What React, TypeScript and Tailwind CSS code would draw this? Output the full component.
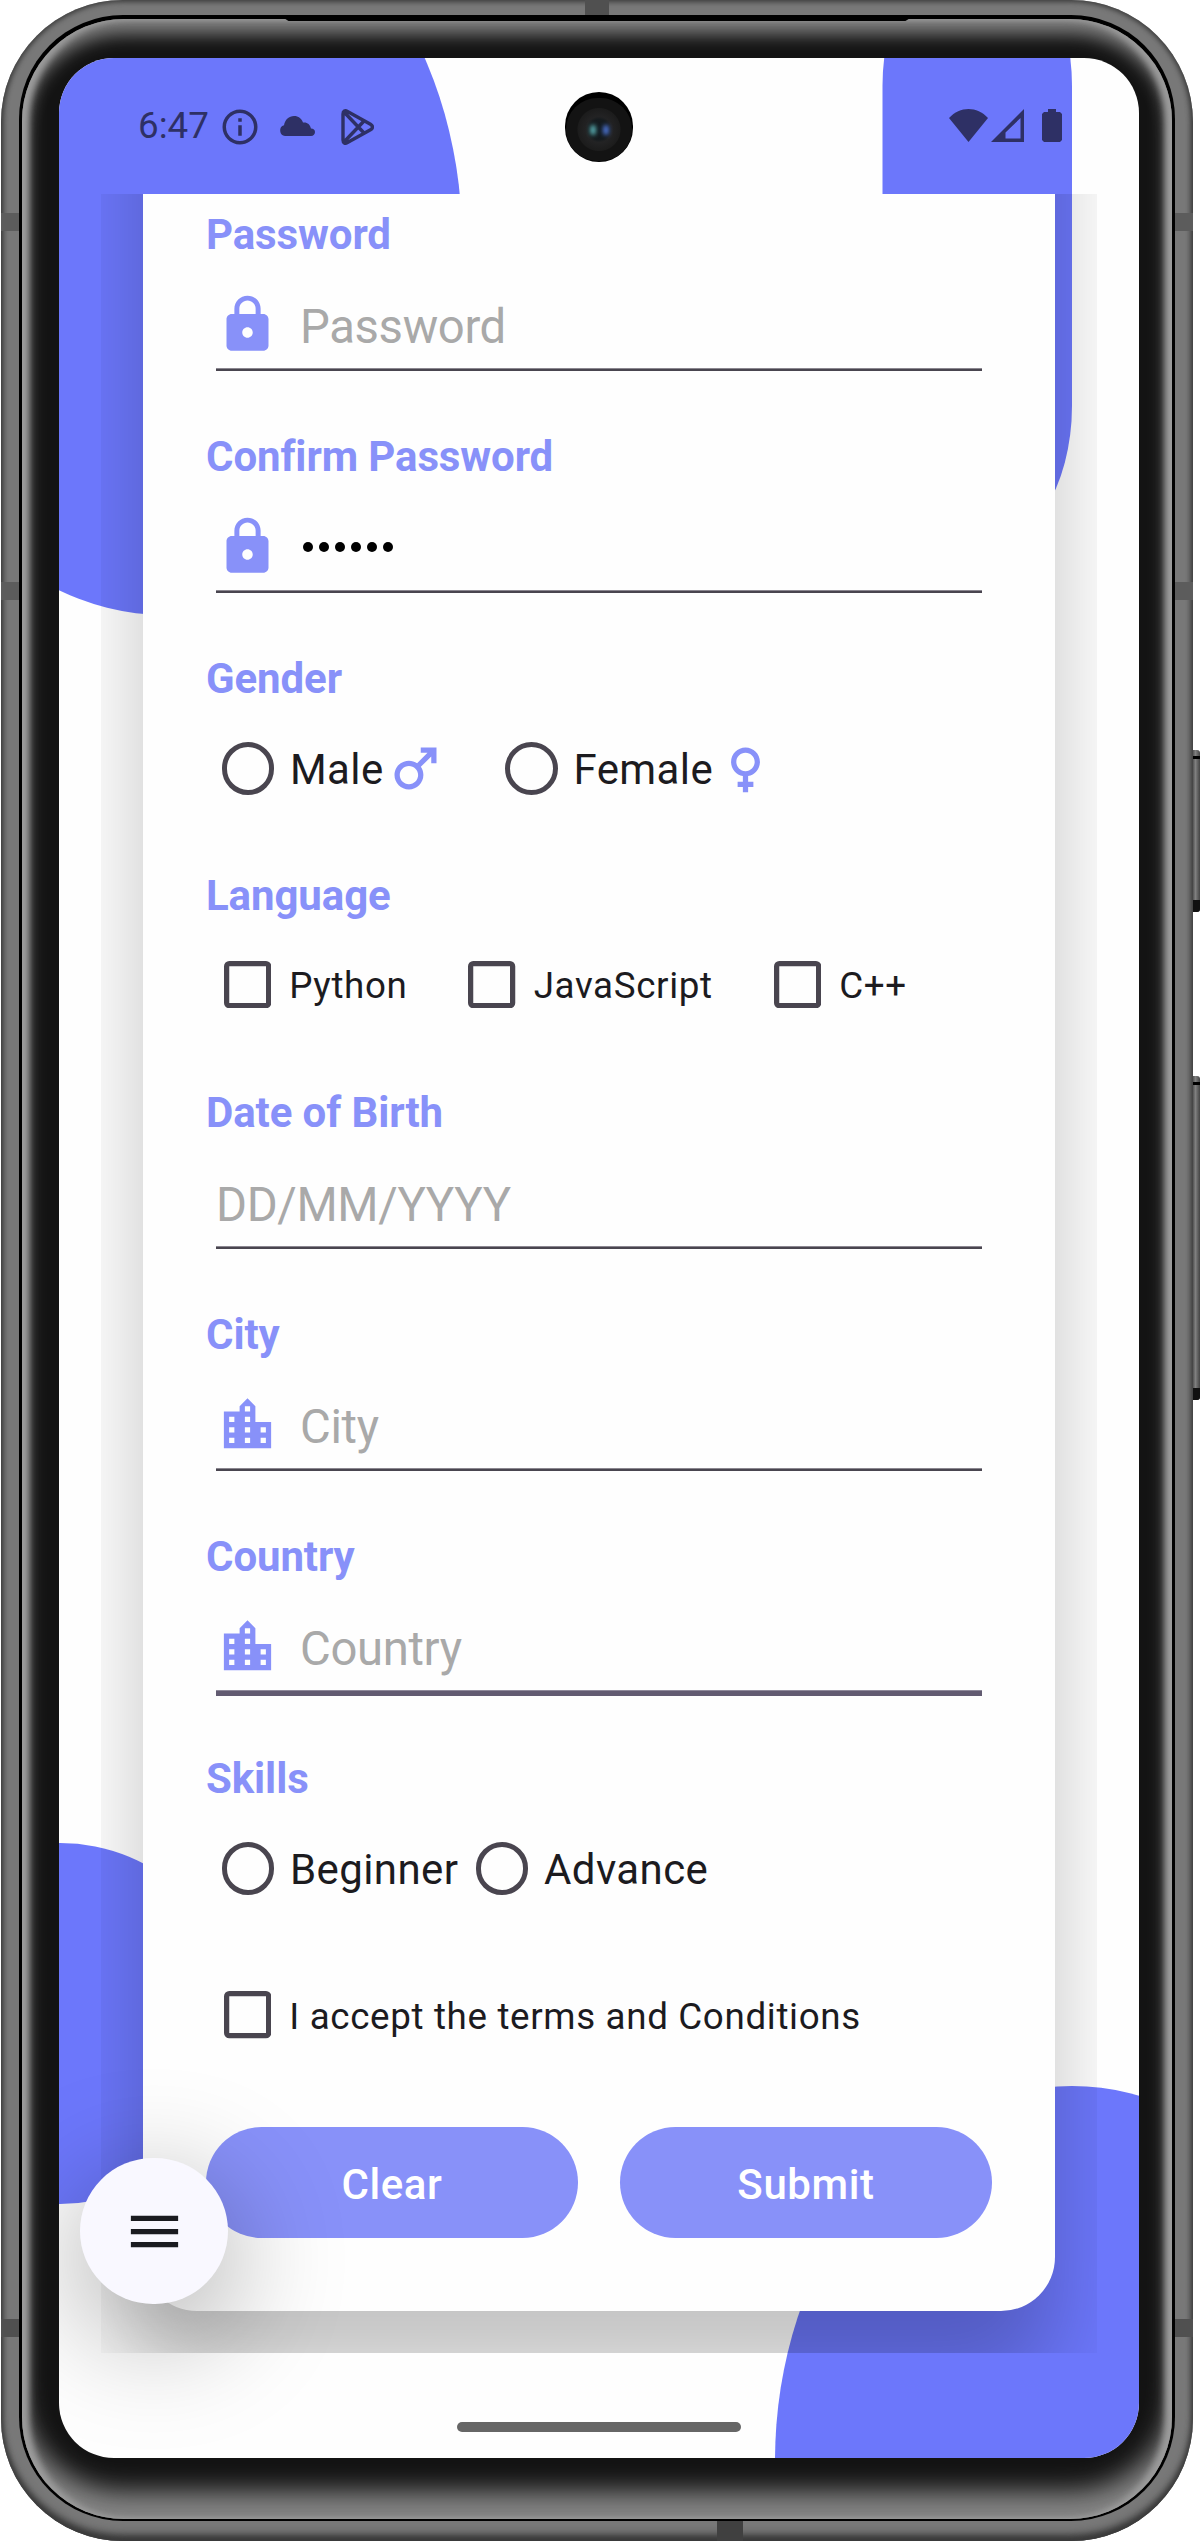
import React from "react";

const LOCK =
  "M18 8h-1V6c0-2.76-2.24-5-5-5S7 3.24 7 6v2H6c-1.1 0-2 .9-2 2v10c0 1.1.9 2 2 2h12c1.1 0 2-.9 2-2V10c0-1.1-.9-2-2-2zm-6 9c-1.1 0-2-.9-2-2s.9-2 2-2 2 .9 2 2-.9 2-2 2zm3.1-9H8.9V6c0-1.71 1.39-3.1 3.1-3.1 1.71 0 3.1 1.39 3.1 3.1v2z";
const CITY =
  "M15 11V5l-3-3-3 3v2H3v14h18V11h-6zm-8 8H5v-2h2v2zm0-4H5v-2h2v2zm0-4H5V9h2v2zm6 8h-2v-2h2v2zm0-4h-2v-2h2v2zm0-4h-2V9h2v2zm0-4h-2V5h2v2zm6 12h-2v-2h2v2zm0-4h-2v-2h2v2z";
const MALE =
  "M9.5 11c1.93 0 3.5 1.57 3.5 3.5S11.43 18 9.5 18 6 16.43 6 14.5 7.57 11 9.5 11zm0-2C6.46 9 4 11.46 4 14.5S6.46 20 9.5 20s5.5-2.46 5.5-5.5c0-1.16-.36-2.23-.97-3.12L18 7.42V10h2V4h-6v2h2.58l-3.97 3.97C11.73 9.36 10.66 9 9.5 9z";
const FEMALE =
  "M17.5 9.5C17.5 6.46 15.04 4 12 4S6.5 6.46 6.5 9.5c0 2.7 1.94 4.93 4.5 5.4V17H9v2h2v2h2v-2h2v-2h-2v-2.1c2.56-.47 4.5-2.7 4.5-5.4zm-9 0C8.5 7.57 10.07 6 12 6s3.5 1.57 3.5 3.5S13.93 13 12 13s-3.5-1.57-3.5-3.5z";

function Icon({ d }: { d: string }) {
  return (
    <svg viewBox="0 0 24 24" className="size-[63px] shrink-0 fill-[#8891f9]">
      <path d={d} />
    </svg>
  );
}

function Section({ label, className, children }: { label: string; className: string; children: React.ReactNode }) {
  return (
    <section className={`flex flex-col ${className}`}>
      <h2 className="h-[50px] text-[42px] leading-[50px] font-bold tracking-[-0.1px] text-[#8891f9]">{label}</h2>
      {children}
    </section>
  );
}

function Field({ icon, placeholder, value, focused }: { icon?: string; placeholder?: string; value?: string; focused?: boolean }) {
  return (
    <div className="mt-[21px] mr-[10px] ml-[10px]">
      <div className="flex h-[87px] items-center gap-[21px] text-[47.25px] leading-[56px]">
        {icon && <Icon d={icon} />}
        {value ? (
          <span className="flex gap-[6.5px] pl-[3px]">
            {value.split("").map((_, i) => (
              <i key={i} className="mt-[1px] h-[10.5px] w-[9.5px] rounded-full bg-black" />
            ))}
          </span>
        ) : (
          <span className="pt-[5px] tracking-[-0.35px] text-[#a9a9a9]">{placeholder}</span>
        )}
      </div>
      {focused ? (
        <div className="h-[6px] bg-[linear-gradient(#8f8a9b_1px,#625b71_1px)]" />
      ) : (
        <div className="h-[3px] bg-[linear-gradient(#8b8790_1px,#49454f_1px)]" />
      )}
    </div>
  );
}

function Radio({ label, className = "" }: { label: string; className?: string }) {
  return (
    <label className={`flex shrink-0 items-center gap-[16px] ${className}`}>
      <span className="size-[52.5px] shrink-0 rounded-full border-[5.25px] border-[#49454f]" />
      <span className="pt-[2.5px] text-[42px] leading-[50px] tracking-[0.4px] text-[#1c1b1f]">{label}</span>
    </label>
  );
}

function Check({ label, className = "" }: { label: string; className?: string }) {
  return (
    <label className={`flex shrink-0 items-center ${className}`}>
      <svg viewBox="0 0 18 18" className="mr-[18px] size-[47.25px] shrink-0">
        <path fill="#49454f" fillRule="evenodd" d="M2 0h14a2 2 0 0 1 2 2v14a2 2 0 0 1-2 2H2a2 2 0 0 1-2-2V2a2 2 0 0 1 2-2zm0 2v14h14V2z" />
      </svg>
      <span className="pt-[3px] text-[36.75px] leading-[44px] tracking-[0.65px] whitespace-nowrap text-[#1c1b1f]">{label}</span>
    </label>
  );
}

function StatusBar() {
  return (
    <div className="absolute inset-x-0 top-0 flex h-[136px] items-center pt-[3px] pl-[79px] text-[#2e3065]">
      <span className="-mt-[4px] w-[80.5px] text-[36.75px] leading-[44px]">6:47</span>
      <svg viewBox="0 0 24 24" className="-mt-[1px] size-[42px]" fill="currentColor">
        <path d="M11 7h2v2h-2zm0 4h2v6h-2zm1-9C6.480 2 2 6.480 2 12s4.480 10 10 10 10-4.480 10-10S17.520 2 12 2zm0 18c-4.410 0-8-3.590-8-8s3.590-8 8-8 8 3.590 8 8-3.590 8-8 8z" />
      </svg>
      <svg viewBox="0 0 36 20" className="mt-[-4px] ml-[18px] h-[20px] w-[36px]" fill="currentColor">
        <path d="M6 20A5.500 5.500 0 0 1 5 9.300C6 3.500 10 0 15 0c4.500 0 7.500 2.500 9 6.500 4-.6 7 1.500 8 6 2.500 0 4 1.500 4 3.500S34.500 20 32 20z" />
      </svg>
      <svg viewBox="0 0 33 36" className="-mt-[1px] ml-[26px] h-[36px] w-[33px]" fill="none" stroke="currentColor" strokeWidth="3.400" strokeLinejoin="round">
        <path d="M2 5v26c0 3 2 4 4.500 2.600l23-12.800c2.600-1.500 2.600-4.100 0-5.600L6.500 2.400C4 1 2 2 2 5zM3 3l20.500 21.500M3 33l20.500-21.500" />
      </svg>
      <svg viewBox="0 0 39 33" className="-mt-[4px] ml-[575px] h-[33px] w-[39px]" fill="currentColor">
        <path d="M0 9C11-3 28-3 39 9L19.500 33z" />
      </svg>
      <svg viewBox="0 0 33 33" className="-mt-[4px] ml-[3px] h-[33px] w-[33px]" fill="currentColor">
        <path fillRule="evenodd" d="M33 0v33H0zM29.500 9L14.500 23.500v6h15z" />
      </svg>
      <svg viewBox="0 0 20 33" className="-mt-[4px] ml-[18.5px] h-[33px] w-[20px]" fill="currentColor">
        <path d="M6 0h8v3h4l2 2v26l-2 2H2l-2-2V5l2-2h4z" />
      </svg>
    </div>
  );
}

function Screen() {
  return (
    <main className="relative h-[2400px] w-[1080px] overflow-hidden rounded-[55px] bg-[#fefefe] font-[Roboto,sans-serif]">
      <svg viewBox="0 0 1080 2400" className="absolute inset-0 size-full" fill="#6c77fb">
        <ellipse cx="106" cy="182" rx="297" ry="375" />
        <rect x="823.500" y="-120" width="189.500" height="616" rx="94.750" ry="148" />
        <circle cx="1" cy="1965.500" r="180.500" />
        <ellipse cx="1013" cy="2403" rx="297" ry="375" />
      </svg>

      <div className="relative mt-[136px] ml-[42px] h-[2159px] w-[996px] overflow-hidden">
        <div className="-mt-[400px] ml-[42px] h-[2517px] w-[912px] rounded-[54px] bg-[#fefefe] pt-[416px] pr-[63px] pl-[63px] shadow-[0_70px_90px_rgba(0,0,0,0.23)]">
          <Section label="Password" className="h-[222px]">
            <Field icon={LOCK} placeholder="Password" />
          </Section>
          <Section label="Confirm Password" className="h-[222px]">
            <Field icon={LOCK} value="secret" />
          </Section>
          <Section label="Gender" className="h-[217px]">
            <div className="mt-[33px] ml-[15.5px] flex h-[63px] items-center">
              <Radio label="Male" className="w-[162.5px]" />
              <Icon d={MALE} />
              <Radio label="Female" className="ml-[58px] w-[208.5px]" />
              <Icon d={FEMALE} />
            </div>
          </Section>
          <Section label="Language" className="h-[217px]">
            <div className="mt-[32px] ml-[18px] flex h-[63px] items-center">
              <Check label="Python" className="w-[244.4px]" />
              <Check label="JavaScript" className="w-[305.6px]" />
              <Check label="C++" />
            </div>
          </Section>
          <Section label="Date of Birth" className="h-[222px]">
            <Field placeholder="DD/MM/YYYY" />
          </Section>
          <Section label="City" className="h-[222px]">
            <Field icon={CITY} placeholder="City" />
          </Section>
          <Section label="Country" className="h-[222px]">
            <Field icon={CITY} placeholder="Country" focused />
          </Section>
          <Section label="Skills" className="h-[216px]">
            <div className="mt-[33px] ml-[15.5px] flex h-[63px] items-center">
              <Radio label="Beginner" className="w-[254px]" />
              <Radio label="Advance" />
            </div>
          </Section>
          <div className="ml-[18px] flex h-[90px] items-center">
            <Check label="I accept the terms and Conditions" />
          </div>
          <div className="mt-[67px] flex gap-[42px] text-[42px] leading-[50px] font-medium tracking-[0.6px] text-white">
            <button className="h-[111px] w-[372px] rounded-full bg-[#8891f9] pt-[4px]">Clear</button>
            <button className="h-[111px] w-[372px] rounded-full bg-[#8891f9] pt-[4px]">Submit</button>
          </div>
        </div>
      </div>

      <StatusBar />

      <div className="absolute top-[34px] left-[506px] h-[70px] w-[68px] rounded-full bg-black p-[6px_1px_1px]">
        <div className="flex h-full items-center justify-center rounded-full bg-[radial-gradient(circle,#101a20_0,#161b1e_10px,#232324_13px,#1c1c1c_21px,#131313_22px)]">
          <i className="h-[10px] w-[6px] rounded-full bg-[#55a5a8] blur-[2px]" />
          <i className="ml-[7px] h-[10px] w-[6px] rounded-full bg-[#4a70cc] blur-[2px]" />
        </div>
      </div>

      <button className="absolute top-[2100px] left-[21px] flex h-[146px] w-[148px] items-center justify-center rounded-full bg-[#f9f8ff] shadow-[0_28px_110px_12px_rgba(0,0,0,0.27)]">
        <svg viewBox="0 0 24 24" className="size-[63px] fill-[#1a1b20]">
          <path d="M3 18h18v-2H3v2zm0-5h18v-2H3v2zm0-7v2h18V6H3z" />
        </svg>
      </button>

      <div className="absolute bottom-[26px] left-[398px] h-[10px] w-[284px] rounded-full bg-[#666]" />
    </main>
  );
}

function SideButton({ className }: { className: string }) {
  return (
    <div className={`absolute left-[1191px] w-[9px] rounded-r-[3px] bg-linear-to-r from-[#333] via-[#808080] to-[#444] ${className}`}>
      <div className="mt-[6px] h-[3px] bg-black" />
      <div className="absolute bottom-0 h-[12px] w-full rounded-br-[3px] bg-[#111]" />
    </div>
  );
}

export default function App() {
  return (
    <div className="relative h-[2541px] w-[1200px] overflow-hidden bg-white">
      <SideButton className="top-[750px] h-[162px]" />
      <SideButton className="top-[1076px] h-[324px]" />
      <div className="relative ml-[1px] h-[2541px] w-[1192px] overflow-hidden rounded-[122px] bg-[#787878] p-[15px_18px_20px] shadow-[inset_0_0_5px_2px_#3c3c3c,inset_0_-8px_8px_-2px_#333]">
        <i className="absolute top-0 left-[584px] h-[16px] w-[24px] bg-[#505050]" />
        <i className="absolute bottom-0 left-[716px] h-[20px] w-[26px] bg-[#404040]" />
        <i className="absolute top-[213px] left-0 h-[18px] w-full bg-[#5c5c5c]" />
        <i className="absolute top-[582px] left-0 h-[18px] w-full bg-[#5c5c5c]" />
        <i className="absolute top-[2319px] left-0 h-[18px] w-full bg-[#505050]" />
        <div className="relative h-full rounded-[104px] bg-black p-[4px_3px_2px]">
          <div className="h-full rounded-[102px] bg-[#131313] p-[39px_37px] shadow-[inset_7px_0_6px_0px_#9c9c9c,inset_-7px_0_6px_0px_#9c9c9c,inset_0_15px_18px_#808080,inset_0_-30px_26px_-2px_#848484]">
            <Screen />
          </div>
          <i className="absolute top-0 left-[260px] h-[6px] w-[636px] bg-black [clip-path:polygon(0_0,100%_0,98.5%_100%,1.500%_100%)]" />
        </div>
      </div>
    </div>
  );
}
